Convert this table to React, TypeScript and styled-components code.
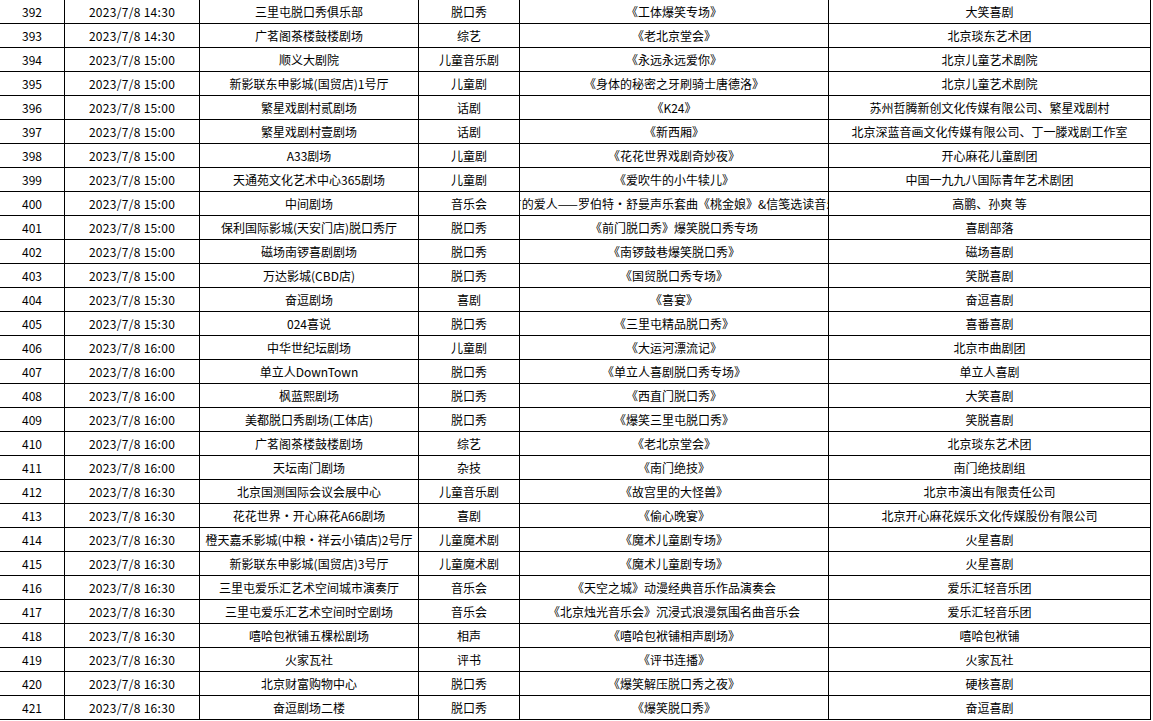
import styled, { createGlobalStyle } from 'styled-components';

const GlobalStyle = createGlobalStyle`
	html, body {
		margin: 0;
		padding: 0;
		background: #ffffff;
		overflow: hidden;
	}
	body {
		font-family: 'Noto Sans CJK SC', 'Liberation Sans', sans-serif;
		font-size: 12px;
		color: #000000;
	}
`;

type Row = [number, string, string, string, string, string];

const rows: Row[] = [
	[392, '14:30', '三里屯脱口秀俱乐部', '脱口秀', '《工体爆笑专场》', '大笑喜剧'],
	[393, '14:30', '广茗阁茶楼鼓楼剧场', '综艺', '《老北京堂会》', '北京琰东艺术团'],
	[394, '15:00', '顺义大剧院', '儿童音乐剧', '《永远永远爱你》', '北京儿童艺术剧院'],
	[395, '15:00', '新影联东申影城(国贸店)1号厅', '儿童剧', '《身体的秘密之牙刷骑士唐德洛》', '北京儿童艺术剧院'],
	[396, '15:00', '繁星戏剧村贰剧场', '话剧', '《K24》', '苏州哲腾新创文化传媒有限公司、繁星戏剧村'],
	[397, '15:00', '繁星戏剧村壹剧场', '话剧', '《新西厢》', '北京深蓝音画文化传媒有限公司、丁一滕戏剧工作室'],
	[398, '15:00', 'A33剧场', '儿童剧', '《花花世界戏剧奇妙夜》', '开心麻花儿童剧团'],
	[399, '15:00', '天通苑文化艺术中心365剧场', '儿童剧', '《爱吹牛的小牛犊儿》', '中国一九九八国际青年艺术剧团'],
	[400, '15:00', '中间剧场', '音乐会', '《远方的爱人——罗伯特·舒曼声乐套曲《桃金娘》&信笺选读音乐会》', '高鹏、孙爽 等'],
	[401, '15:00', '保利国际影城(天安门店)脱口秀厅', '脱口秀', '《前门脱口秀》爆笑脱口秀专场', '喜剧部落'],
	[402, '15:00', '磁场南锣喜剧剧场', '脱口秀', '《南锣鼓巷爆笑脱口秀》', '磁场喜剧'],
	[403, '15:00', '万达影城(CBD店)', '脱口秀', '《国贸脱口秀专场》', '笑脱喜剧'],
	[404, '15:30', '奋逗剧场', '喜剧', '《喜宴》', '奋逗喜剧'],
	[405, '15:30', '024喜说', '脱口秀', '《三里屯精品脱口秀》', '喜番喜剧'],
	[406, '16:00', '中华世纪坛剧场', '儿童剧', '《大运河漂流记》', '北京市曲剧团'],
	[407, '16:00', '单立人DownTown', '脱口秀', '《单立人喜剧脱口秀专场》', '单立人喜剧'],
	[408, '16:00', '枫蓝熙剧场', '脱口秀', '《西直门脱口秀》', '大笑喜剧'],
	[409, '16:00', '美都脱口秀剧场(工体店)', '脱口秀', '《爆笑三里屯脱口秀》', '笑脱喜剧'],
	[410, '16:00', '广茗阁茶楼鼓楼剧场', '综艺', '《老北京堂会》', '北京琰东艺术团'],
	[411, '16:00', '天坛南门剧场', '杂技', '《南门绝技》', '南门绝技剧组'],
	[412, '16:30', '北京国测国际会议会展中心', '儿童音乐剧', '《故宫里的大怪兽》', '北京市演出有限责任公司'],
	[413, '16:30', '花花世界·开心麻花A66剧场', '喜剧', '《偷心晚宴》', '北京开心麻花娱乐文化传媒股份有限公司'],
	[414, '16:30', '橙天嘉禾影城(中粮·祥云小镇店)2号厅', '儿童魔术剧', '《魔术儿童剧专场》', '火星喜剧'],
	[415, '16:30', '新影联东申影城(国贸店)3号厅', '儿童魔术剧', '《魔术儿童剧专场》', '火星喜剧'],
	[416, '16:30', '三里屯爱乐汇艺术空间城市演奏厅', '音乐会', '《天空之城》动漫经典音乐作品演奏会', '爱乐汇轻音乐团'],
	[417, '16:30', '三里屯爱乐汇艺术空间时空剧场', '音乐会', '《北京烛光音乐会》沉浸式浪漫氛围名曲音乐会', '爱乐汇轻音乐团'],
	[418, '16:30', '嘻哈包袱铺五棵松剧场', '相声', '《嘻哈包袱铺相声剧场》', '嘻哈包袱铺'],
	[419, '16:30', '火家瓦社', '评书', '《评书连播》', '火家瓦社'],
	[420, '16:30', '北京财富购物中心', '脱口秀', '《爆笑解压脱口秀之夜》', '硬核喜剧'],
	[421, '16:30', '奋逗剧场二楼', '脱口秀', '《爆笑脱口秀》', '奋逗喜剧'],
];

export default function App() {
	return (
		<>
			<GlobalStyle />
			<Sheet>
				{rows.map(([no, time, venue, kind, title, org]) => (
					<Row key={no}>
						<Cell>{no}</Cell>
						<Cell $mono>{`2023/7/8 ${time}`}</Cell>
						<Cell>{venue}</Cell>
						<Cell>{kind}</Cell>
						<Cell>{title}</Cell>
						<Cell>{org}</Cell>
					</Row>
				))}
			</Sheet>
		</>
	);
}

const Sheet = styled.div`
	margin: -1px 0 0 -1px;
	width: 1152px;
	border-top: 1px solid #000;
	border-left: 1px solid #000;
	background: #fff;
`;

const Row = styled.div`
	display: grid;
	grid-template-columns: 65px 135px 219px 101px 309px 322px;
	height: 24px;
`;

const Cell = styled.div<{ $mono?: boolean }>`
	box-sizing: border-box;
	display: flex;
	align-items: center;
	justify-content: center;
	overflow: hidden;
	white-space: nowrap;
	height: 24px;
	border-right: 1px solid #000;
	border-bottom: 1px solid #000;
	padding-top: 1px;
	font-size: 12px;
	line-height: 14px;
	letter-spacing: ${p => (p.$mono ? '0.3px' : '0')};
`;
